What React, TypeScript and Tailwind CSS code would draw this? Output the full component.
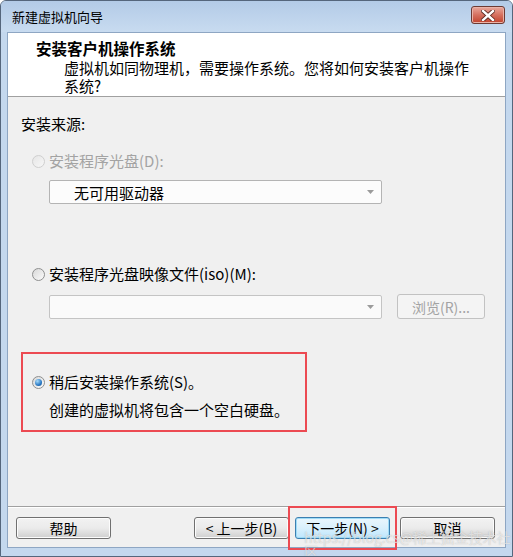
import clsx from "clsx";

function Radio({ checked, disabled }: { checked?: boolean; disabled?: boolean }) {
  return (
    <span
      className={clsx(
        "flex h-[13px] w-[13px] shrink-0 items-center justify-center rounded-full border",
        disabled
          ? "border-[#cfcfcf] bg-linear-to-br from-[#e6e6e6] to-[#f7f7f7]"
          : "border-[#8e8f8f] bg-linear-to-br from-[#d8d8d8] to-[#fbfbfb]"
      )}
    >
      {checked ? (
        <span className="h-[7px] w-[7px] rounded-full bg-[radial-gradient(circle_at_35%_30%,#a8dcfb,#2a79c4_60%,#114b8a)]" />
      ) : null}
    </span>
  );
}

function ComboArrow() {
  return (
    <svg width="7" height="4" viewBox="0 0 7 4" className="mr-[7px] shrink-0">
      <polygon points="0,0 7,0 3.5,4" fill="#9b9b9b" />
    </svg>
  );
}

function WinButton({
  children,
  focused,
}: {
  children: any;
  focused?: boolean;
}) {
  return (
    <div
      className={clsx(
        "flex h-[22px] w-[95px] items-center justify-center rounded-[3px] border text-[14px] leading-none text-black",
        focused
          ? "border-[#3c7fb1] bg-linear-to-b from-[#eaf6fd] via-[#d9f0fc] to-[#bee6fd] shadow-[inset_0_0_0_1px_#9fdcf7]"
          : "border-[#707070] bg-linear-to-b from-[#f2f2f2] via-[#ebebeb] to-[#cfcfcf] shadow-[inset_0_0_0_1px_#fcfcfc]"
      )}
    >
      {children}
    </div>
  );
}

export default function App() {
  return (
    <div className="relative flex h-[557px] w-[513px] flex-col overflow-hidden rounded-t-[6px] border border-[#55667c] bg-[#c4d8ee] font-['Noto_Sans_CJK_SC','Liberation_Sans',sans-serif] text-black">
      {/* title bar */}
      <div className="flex h-[31px] shrink-0 items-center justify-between bg-linear-to-b from-[#b3cbe7] to-[#c8dbf0] pl-[11px] pr-[7px]">
        <span className="text-[13px] leading-none text-black">新建虚拟机向导</span>
        <div className="mb-[3px] flex h-[18px] w-[34px] items-center justify-center rounded-[3px] border border-[#6d3a33] bg-linear-to-b from-[#e8a89d] via-[#d5705f] to-[#c1412c] shadow-[inset_0_0_0_1px_#eab3a8]">
          <svg width="14" height="11" viewBox="0 0 14 11">
            <path
              d="M2 1 L12 10 M12 1 L2 10"
              stroke="#5c2a22"
              strokeWidth="4.2"
              strokeLinecap="square"
            />
            <path
              d="M2 1 L12 10 M12 1 L2 10"
              stroke="#ffffff"
              strokeWidth="2.4"
              strokeLinecap="square"
            />
          </svg>
        </div>
      </div>

      {/* client area */}
      <div className="mx-[6px] flex flex-1 flex-col border border-[#8ea6c3] bg-[#f0f0f0]">
        {/* header */}
        <div className="h-[64px] shrink-0 border-b border-[#a0a0a0] bg-white pl-[28px] pt-[5px]">
          <div className="text-[15.5px] font-bold leading-[20px]">安装客户机操作系统</div>
          <div className="mt-[1px] pl-[28px] text-[15px] leading-[18px]">
            虚拟机如同物理机，需要操作系统。您将如何安装客户机操作
            <br />
            系统?
          </div>
        </div>

        {/* content */}
        <div className="flex flex-1 flex-col pl-[13px] pt-[17px] text-[15px]">
          <div className="leading-[20px]">安装来源:</div>

          <div className="ml-[11px] mt-[17px] flex h-[20px] items-center gap-[4px] text-[#a3a3a3]">
            <Radio disabled />
            <span className="leading-[20px]">安装程序光盘(D):</span>
          </div>

          <div className="ml-[28px] mt-[9px] flex h-[24px] w-[333px] items-center justify-between rounded-[2px] border border-[#b4b4b4] bg-[#fcfcfc]">
            <span className="pl-[24px] leading-none">无可用驱动器</span>
            <ComboArrow />
          </div>

          <div className="ml-[11px] mt-[60px] flex h-[20px] items-center gap-[4px]">
            <Radio />
            <span className="leading-[20px]">安装程序光盘映像文件(iso)(M):</span>
          </div>

          <div className="ml-[28px] mt-[10px] flex items-center gap-[15px]">
            <div className="flex h-[24px] w-[333px] items-center justify-end rounded-[2px] border border-[#c4c4c4] bg-[#fafafa]">
              <ComboArrow />
            </div>
            <div className="flex h-[25px] w-[88px] items-center justify-center rounded-[3px] border border-[#c2c2c2] bg-[#f4f4f4] text-[14px] leading-none text-[#a3a3a3]">
              浏览(R)...
            </div>
          </div>

          <div className="mt-[33px] flex h-[80px] w-[286px] flex-col border-2 border-[#ec4a52] pl-[9px] pt-[18px]">
            <div className="flex h-[20px] items-center gap-[4px]">
              <Radio checked />
              <span className="leading-[20px]">稍后安装操作系统(S)。</span>
            </div>
            <div className="ml-[17px] mt-[8px] leading-[20px]">创建的虚拟机将包含一个空白硬盘。</div>
          </div>
        </div>

        {/* buttons */}
        <div className="flex h-[41px] shrink-0 items-start border-t border-[#a0a0a0] pl-[8px] pr-[10px] pt-[10px] shadow-[inset_0_1px_0_#ffffff]">
          <WinButton>帮助</WinButton>
          <div className="ml-auto flex gap-[11px]">
            <WinButton>&lt; 上一步(B)</WinButton>
            <div className="relative -ml-[5px] mr-[-1px]">
              <WinButton focused>下一步(N) &gt;</WinButton>
              <div className="pointer-events-none absolute -bottom-[11px] -left-[7px] -right-[7px] -top-[11px] border-2 border-[#ec4a52]" />
            </div>
            <WinButton>取消</WinButton>
          </div>
        </div>
      </div>

      {/* bottom frame */}
      <div className="h-[8px] shrink-0" />

      {/* watermark */}
      <div className="pointer-events-none absolute left-[303px] top-[529px] text-[14px] leading-none text-white/60 [text-shadow:0_0_1px_rgba(120,120,120,0.5)]">
        https://blog.cs@稀土掘金技术社区
      </div>
    </div>
  );
}
